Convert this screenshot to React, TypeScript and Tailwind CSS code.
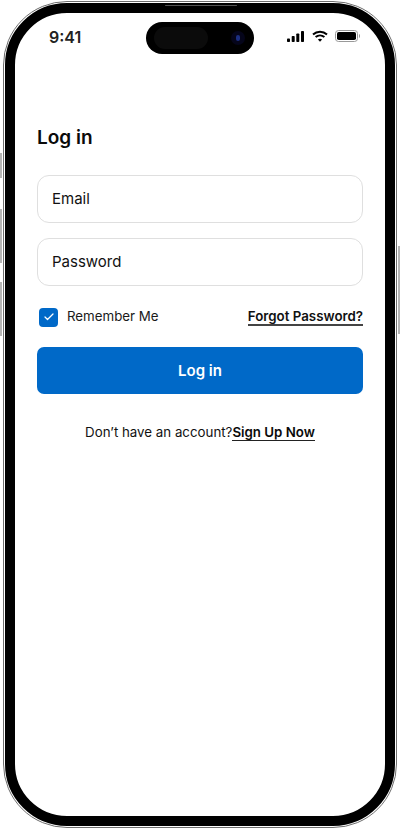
import { Check } from 'lucide-react'

function StatusBar() {
  return (
    <div className="relative flex h-[42px] items-center justify-between pl-[34px] pr-[25px] pt-[4px]">
      <span className="mt-[1px] text-[16px] font-semibold leading-none text-[#222]">9:41</span>

      {/* Dynamic island */}
      <div className="absolute left-[131px] top-[9px] flex h-[32px] w-[108px] items-center rounded-full bg-black pl-[8px] pr-[9px]">
        <div className="h-[22px] w-[54px] rounded-full bg-[#0b0b0b]" />
        <div className="ml-auto flex h-[14px] w-[14px] items-center justify-center rounded-full bg-[#05051a]">
          <div className="h-[6px] w-[4px] rounded-full bg-[#1c2f80]" />
        </div>
      </div>

      <div className="flex items-center gap-[7.5px]">
        <svg width="17" height="11" viewBox="0 0 17 11" fill="#000">
          <rect x="0" y="7.500" width="3" height="3.500" rx="0.8" />
          <rect x="4.700" y="5" width="3" height="6" rx="0.8" />
          <rect x="9.300" y="2.500" width="3" height="8.500" rx="0.8" />
          <rect x="14" y="0" width="3" height="11" rx="0.8" />
        </svg>
        <svg width="16" height="12" viewBox="0 0 16 12" fill="none" stroke="#000" strokeWidth="2">
          <path d="M1 4.400C5 .7 11 .7 15 4.400" />
          <path d="M3.600 7.100c2.600-2.300 6.200-2.300 8.800 0" />
          <path d="M8 11.800 5.900 9.600c1.200-1 3-1 4.200 0Z" fill="#000" stroke="none" />
        </svg>
        <svg width="25" height="12" viewBox="0 0 25 12" fill="none">
          <rect x="0.500" y="0.500" width="22" height="11" rx="3" stroke="#999" />
          <rect x="2" y="2" width="19" height="8" rx="1.800" fill="#000" />
          <path d="M24 4v4c.7-.3 1-1.100 1-2s-.3-1.700-1-2Z" fill="#999" />
        </svg>
      </div>
    </div>
  )
}

function TextInput({ label }: { label: string }) {
  return (
    <div className="flex h-[48px] items-center rounded-[12px] border border-[#dfdfdf] bg-white px-[14px] text-[15px] text-[#111]">
      {label}
    </div>
  )
}

function LoginForm() {
  return (
    <div className="px-[22px] pt-[71px]">
      <h1 className="text-[19px] font-semibold leading-[24px] text-[#0a0a0a]">Log in</h1>

      <div className="mt-[25px] flex flex-col gap-[15px]">
        <TextInput label="Email" />
        <TextInput label="Password" />
      </div>

      <div className="mt-[21px] flex h-[20px] items-center justify-between">
        <label className="flex items-center gap-[9px] pl-[2px] text-[13.3px] text-[#1a1a1a]">
          <span className="flex h-[19px] w-[19px] items-center justify-center rounded-[4px] bg-[#0069c8]">
            <Check size={12} strokeWidth={2.5} color="#fff" />
          </span>
          Remember Me
        </label>
        <a className="border-b-2 border-[#444] text-[13.3px] font-semibold leading-[15px] text-[#111]">Forgot Password?</a>
      </div>

      <button className="mt-[20px] h-[47px] w-full rounded-[7px] bg-[#0069c8] pt-[1px] text-[15px] font-semibold text-white">
        Log in
      </button>

      <p className="mt-[30px] flex justify-center text-[13.3px] leading-[16px] text-[#111]">
        Don’t have an account?
        <a className="border-b border-[#222] font-semibold text-[#0a0a0a]">Sign Up Now</a>
      </p>
    </div>
  )
}

export default function App() {
  return (
    <div className="relative h-[829px] w-[400px] overflow-hidden bg-white px-[3px] pt-[1px] font-['Inter',sans-serif]">
      {/* Side buttons */}
      <div className="absolute left-0 top-[153px] h-[25px] w-[2px] bg-[#b5b5b5]" />
      <div className="absolute left-0 top-[209px] h-[54px] w-[2px] bg-[#b5b5b5]" />
      <div className="absolute left-0 top-[282px] h-[54px] w-[2px] bg-[#b5b5b5]" />
      <div className="absolute right-0 top-[246px] h-[88px] w-[2px] bg-[#b5b5b5]" />

      {/* Phone frame */}
      <div className="relative h-[827px] rounded-[64px] border border-[#6e6e6e] bg-white p-[1px]">
        <div className="h-full rounded-[62px] border-[10px] border-black bg-white">
          <StatusBar />
          <LoginForm />
        </div>
        {/* Earpiece slit */}
        <div className="absolute left-[161px] top-[3px] h-[1px] w-[72px] rounded-full bg-[#555]" />
      </div>
    </div>
  )
}
